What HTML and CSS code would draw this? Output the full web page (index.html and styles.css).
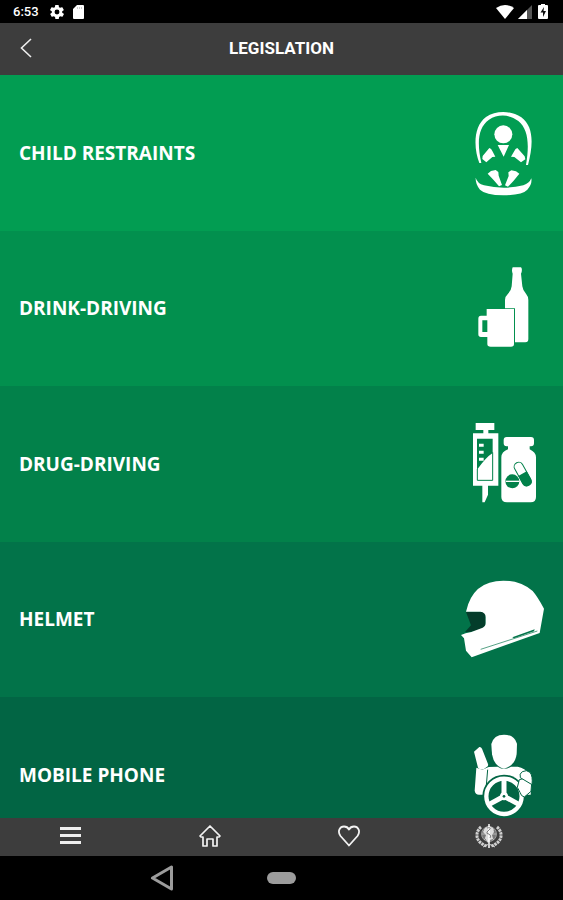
FILE: index.html
```html
<!DOCTYPE html>
<html lang="en">
<head>
    <meta charset="UTF-8">
    <meta name="viewport" content="width=device-width, initial-scale=1.0">
    <title>Legislation</title>
    <link rel="stylesheet" href="styles.css">
</head>
<body>

    <!-- Device status bar -->
    <div class="status-bar">
        <div class="status-group">
            <span class="clock">6:53</span>
            <svg class="gear" width="14" height="14" viewBox="2 2 20 20" fill="#fff"><path d="M19.4 13a7.500 7.500 0 0 0 0-2l2.100-1.600a.5.5 0 0 0 .1-.7l-2-3.400a.5.5 0 0 0-.6-.2l-2.500 1a7.300 7.300 0 0 0-1.700-1l-.4-2.700a.5.500 0 0 0-.5-.4h-4a.5.500 0 0 0-.5.400l-.4 2.700a7.300 7.300 0 0 0-1.700 1l-2.500-1a.5.500 0 0 0-.6.200l-2 3.400a.5.500 0 0 0 .1.700L4.600 11a7.500 7.500 0 0 0 0 2l-2.100 1.600a.5.500 0 0 0-.1.700l2 3.400c.1.200.4.300.6.200l2.500-1a7.300 7.300 0 0 0 1.700 1l.4 2.700c0 .2.200.4.500.4h4c.2 0 .5-.2.500-.4l.4-2.700a7.300 7.300 0 0 0 1.700-1l2.500 1c.2.100.5 0 .6-.2l2-3.400a.5.500 0 0 0-.1-.7zM12 15.500a3.500 3.500 0 1 1 0-7 3.500 3.500 0 0 1 0 7z"/></svg>
            <svg width="11" height="14" viewBox="0 0 11 14"><path fill="#fff" d="M4 0h6q1 0 1 1v12q0 1-1 1H1q-1 0-1-1V4z"/><path stroke="#ccc" d="M4.500 2v2M6.500 2v2M8.500 2v2"/></svg>
        </div>
        <div class="status-group">
            <svg width="18" height="14" viewBox="0 0 18 14"><path fill="#fff" d="M0 3q9-6 18 0L9 14z"/></svg>
            <svg width="14" height="14" viewBox="0 0 14 14"><path fill="#555" d="M14 0v14H0z"/><path fill="#fff" d="M9 5v9H0z"/></svg>
            <svg class="battery" width="10" height="15" viewBox="0 0 10 15"><path fill="#fff" d="M3 0h4v1h2q1 0 1 1v12q0 1-1 1H1q-1 0-1-1V2q0-1 1-1h2z"/><path fill="#111" d="M6 3 2.500 8.500H5V13l3-6H5.500z"/></svg>
        </div>
    </div>

    <header class="title-bar">
        <button class="back-button" aria-label="Back">
            <svg width="12" height="20" viewBox="0 0 12 20"><path fill="none" stroke="#eee" stroke-width="1.600" d="M11 1 1.500 10 11 19"/></svg>
        </button>
        <h1>LEGISLATION</h1>
    </header>

    <main class="topics">
        <a class="topic child" href="#">
            <span>CHILD RESTRAINTS</span>
            <svg class="topic-icon" viewBox="0 9 300 330">
                <path fill="#fff" d="M73 204C56 160 54 95 93 66C122 46 168 46 199 67C237 95 235 150 219 210H213C223 150 221 104 190 78C163 57 128 57 102 74C68 98 66 145 79 204z"/>
                <circle cx="145" cy="118" r="27"/>
                <path d="M128 150h34l-16 35z"/>
                <path d="M103 159q6 2 9 9l9 17-9 1-18 16-12-10 1-9zM187 159q-6 2-9 9l-10 17 10 1 20 16 13-9-2-9z"/>
                <path d="m98 236 10-8 14-3 8 6 1 11 10 28-9 4q-15-19-34-38zM193 236l-10-7-14-3-9 6 1 11-11 28 9 4q18-18 34-39z"/>
                <path d="M62 248q5 17 25 23 60 14 118 0 18-6 24-21 3 18-12 34-14 16-72 17-54-1-70-17-14-16-13-36z"/>
            </svg>
        </a>
        <a class="topic drink" href="#">
            <span>DRINK-DRIVING</span>
            <svg class="topic-icon" viewBox="0 -3 300 330">
                <path d="M173 40h25q4 3 2 14l-2 5 4 38q1 11 11 22 7 8 7 19v117q0 10-9 10h-31V163h-30v-25q0-11 9-19 10-9 11-22l3-38q-4-10 0-19z"/>
                <path fill-rule="evenodd" d="M95 165h82v105q0 8-9 8h-61q-10 0-10-8v-21H78q-8 0-8-8v-47q0-9 8-9h17zM82 199v35h15v-35z"/>
            </svg>
        </a>
        <a class="topic drug" href="#">
            <span>DRUG-DRIVING</span>
            <svg class="topic-icon" viewBox="0 0 300 330">
                <path d="M62 42h56v21h-18v10h30v157h-31v27l-10 23h-7v-50H54V73h31V63H62z"/>
                <path class="hole" d="M66 89h47v43q-20 13-43 45l-4 5z"/>
                <path class="line" stroke-width="3" d="M67 180v34h46v-84"/>
                <path d="M72 104h14v9H72zM72 125h14v9H72zM72 146h14v9H72z"/>
                <path d="M155 84h73q9 0 9 9v10q0 9-9 9h-4v9q19 9 19 24v119q0 16-16 16h-71q-17 0-17-16V145q0-16 20-24v-9h-4q-9 0-9-9V93q0-9 9-9z"/>
                <circle class="hole" cx="172" cy="217" r="21"/>
                <path stroke="#fff" stroke-width="4" d="M152 217h42"/>
                <g transform="rotate(-29 203 196)">
                    <rect class="line" x="190" y="157" width="27" height="76" rx="13" stroke-width="3"/>
                    <path class="hole" d="M189 194h29v28q0 13-14 13t-15-13z"/>
                </g>
            </svg>
        </a>
        <a class="topic helmet" href="#">
            <span>HELMET</span>
            <svg class="topic-icon" viewBox="15 0 300 330">
                <path fill="#043d2b" d="M48 144h58v50l-43 9-18 1 18-20z"/>
                <path d="M48 143Q68 50 160 50q51 0 88 31 14 16 34 53l-13 73L65 280 48 260l-6-37-9-10q12-6 31-9l34-13q9-4 9-14v-18q0-14-16-16z"/>
                <path class="line" stroke-width="2" d="m92 256 170-55"/>
                <path class="hole" d="m187 220 67-24-2 6-60 21z"/>
            </svg>
        </a>
        <a class="topic phone" href="#">
            <span>MOBILE PHONE</span>
            <svg class="topic-icon" viewBox="0 -15 300 330">
                <path d="M64 128l18 6 19-8 27-1q20 13 40 0h20q22 4 34 21l8 18-3 45H72q-11 0-13-12z"/>
                <path class="line" stroke-width="3" d="M98 134 93 193"/>
                <path d="M147 29q31 0 39 27l-1 31q-5 36-38 44-30-7-36-43l-2-31q7-28 38-28z"/>
                <path d="m57 80 16-14q5-1 8 5l18 46q2 7-4 9l-9 7q-10 3-17-5z"/>
                <circle class="hole" cx="147" cy="214" r="65"/>
                <circle cx="147" cy="214" r="53" fill="none" stroke="#fff" stroke-width="13"/>
                <path fill="none" stroke="#fff" stroke-width="15" d="M147 160v50M143 216l-42 23M151 216l42 23"/>
                <circle cx="147" cy="214" r="12"/>
                <circle class="hole" cx="147" cy="214" r="4"/>
                <path class="outlined" d="m193 164 15-4 22 16-2 23-20 17q-10-2-13-14l-8-15z"/>
                <path class="outlined" d="M196 158q-4-12 6-18 13-7 23 2 9 12 6 37z"/>
            </svg>
        </a>
    </main>

    <nav class="tab-bar">
        <a href="#" aria-label="Menu">
            <svg width="22" height="20" viewBox="0 0 22 20"><path stroke="#eee" stroke-width="3" d="M1 2.500h21M1 9.500h21M1 16.500h21"/></svg>
        </a>
        <a href="#" aria-label="Home">
            <svg width="22" height="22" viewBox="0 0 22 22"><path fill="none" stroke="#f2f2f2" stroke-width="1.700" stroke-linejoin="round" d="M1 11 11 1l10 10-1 1h-2v9h-4v-7H8v7H4v-9H2z"/></svg>
        </a>
        <a href="#" aria-label="Favourites">
            <svg width="22" height="22" viewBox="0 0 22 22"><path fill="none" stroke="#f2f2f2" stroke-width="1.800" stroke-linejoin="round" d="M11 20.500 2.500 11C-1 6 2 1.500 6 1.500c2.500 0 4 1 5 3 1-2 2.500-3 5-3 4 0 7 4.500 3.500 9.500z"/></svg>
        </a>
        <a href="#" aria-label="World Health Organization">
            <svg width="28" height="26" viewBox="0 0 28 26" fill="none" stroke="#d0d0d0">
                <path stroke-width="3" stroke-dasharray="2.500 .7" d="M6 4C-1 10 1 20 12 23M22 4c7 6 5 16-6 19"/>
                <circle cx="14" cy="11" r="7.500" fill="#777" stroke="#aaa" stroke-width=".8"/>
                <path stroke-width=".7" d="M7 11h14M9 6l10 11M19 6 9 17"/>
                <path fill="#ddd" stroke="none" d="m10 5 4-2 4 2 1 4-2 3 1 4-3 1-2 3-3-5 1-3-3-3z"/>
                <path stroke="#fff" stroke-width="1.500" d="M14 1v24"/>
                <path stroke="#666" stroke-width=".8" d="M12 5q4-1 3 1l-3 3q-1 2 2 2 3 2 1 4"/>
                <path d="m8 24 6-3 6 3"/>
            </svg>
        </a>
    </nav>

    <!-- Device navigation keys -->
    <div class="system-nav">
        <button aria-label="System back">
            <svg width="24" height="26" viewBox="0 0 24 26"><path fill="none" stroke="#9c9c9c" stroke-width="3" stroke-linejoin="round" d="M21.500 2v22L2.500 13z"/></svg>
        </button>
        <button aria-label="System home"><span class="pill"></span></button>
    </div>

</body>
</html>
```

FILE: styles.css
```css
* {
    box-sizing: border-box;
}

body {
    margin: 0;
    height: 100vh;
    display: flex;
    flex-direction: column;
    overflow: hidden;
    background-color: #000;
    color: #fff;
    font-family: "Open Sans", sans-serif;
}

svg {
    display: block;
}

button {
    display: flex;
    align-items: center;
    justify-content: center;
    padding: 0;
    border: none;
    background: none;
    cursor: pointer;
}

.status-bar {
    flex: none;
    height: 23px;
    display: flex;
    align-items: center;
    justify-content: space-between;
    padding: 0 15px 0 13px;
    background-color: #000;
}

.status-group {
    display: flex;
    align-items: center;
    gap: 4px;
}

.clock {
    font-family: Roboto, sans-serif;
    font-size: 13px;
    font-weight: 500;
}

.gear {
    margin: 0 5px 0 7px;
}

.battery {
    margin-left: 2px;
}

.title-bar {
    flex: none;
    height: 52px;
    display: grid;
    grid-template-columns: 52px 1fr 52px;
    align-items: center;
    padding-bottom: 2px;
    background-color: #3d3d3d;
}

.back-button {
    height: 48px;
}

.title-bar h1 {
    margin: 0;
    text-align: center;
    font-family: Roboto, sans-serif;
    font-size: 17px;
    font-weight: 700;
}

.topics {
    flex: 1;
    min-height: 0;
    overflow: hidden;
}

.topic {
    aspect-ratio: 181 / 50;
    display: flex;
    align-items: center;
    justify-content: space-between;
    padding: 0 8px 0 19px;
    color: #fff;
    font-size: 19px;
    font-weight: 700;
    text-decoration: none;
    background-color: var(--shade);
}

/* Each row is a darker green than the one above */
.child { --shade: #029d52; }
.drink { --shade: #02904e; }
.drug { --shade: #02814a; }
.helmet { --shade: #027349; }
.phone { --shade: #026544; }

.topic-icon {
    flex: none;
    width: 100px;
    height: 110px;
    fill: #fff;
}

.hole {
    fill: var(--shade);
}

.line {
    fill: none;
    stroke: var(--shade);
}

.outlined {
    stroke: var(--shade);
    stroke-width: 3px;
}

.tab-bar {
    flex: none;
    height: 38px;
    display: flex;
    padding: 0 4px 2px 0;
    background-color: #3d3d3d;
}

.tab-bar a {
    flex: 1;
    display: flex;
    align-items: center;
    justify-content: center;
}

.system-nav {
    flex: none;
    height: 44px;
    display: grid;
    grid-template-columns: repeat(3, 120px);
    justify-content: center;
    background-color: #000;
}

.pill {
    width: 29px;
    height: 12px;
    border-radius: 6px;
    background-color: #9c9c9c;
}
```
